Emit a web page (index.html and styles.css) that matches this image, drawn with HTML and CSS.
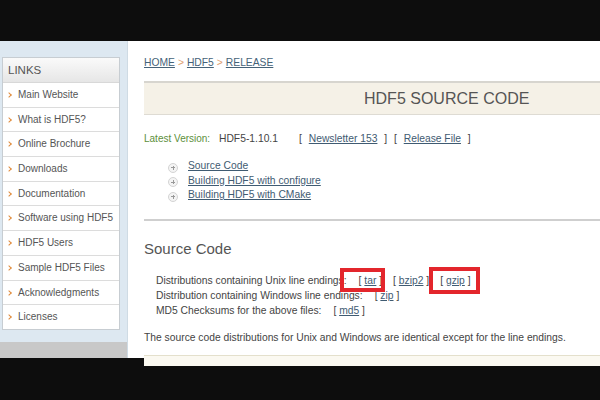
FILE: index.html
```html
<!DOCTYPE html>
<html>
<head>
<meta charset="utf-8">
<link rel="stylesheet" href="styles.css">
</head>
<body>
<div class="frame">
  <div class="bar top"></div>
  <div class="page">
    <aside class="sidebar">
      <div class="side-top">
        <div class="links">
          <div class="links-head">LINKS</div>
          <a class="link">Main Website</a>
          <a class="link">What is HDF5?</a>
          <a class="link">Online Brochure</a>
          <a class="link">Downloads</a>
          <a class="link">Documentation</a>
          <a class="link">Software using HDF5</a>
          <a class="link">HDF5 Users</a>
          <a class="link">Sample HDF5 Files</a>
          <a class="link">Acknowledgments</a>
          <a class="link">Licenses</a>
        </div>
      </div>
      <div class="side-foot"></div>
    </aside>
    <main class="main">
      <div class="crumbs"><a>HOME</a><span class="sep">&gt;</span><a>HDF5</a><span class="sep">&gt;</span><a>RELEASE</a></div>
      <div class="title-box"><span>HDF5 SOURCE CODE</span></div>
      <div class="latest">
        <span class="lv">Latest Version:</span>
        <span class="ver">HDF5-1.10.1</span>
        <span class="refs">[ <a>Newsletter 153</a> ] [ <a>Release File</a> ]</span>
      </div>
      <ul class="toc">
        <li><span class="plus"></span><a>Source Code</a></li>
        <li><span class="plus"></span><a>Building HDF5 with configure</a></li>
        <li><span class="plus"></span><a>Building HDF5 with CMake</a></li>
      </ul>
      <hr class="rule">
      <h2 class="sec">Source Code</h2>
      <div class="dist">
        <div class="row"><span class="lbl">Distributions containing Unix line endings:</span><span class="files"><span>[ <a>tar</a> ]</span><span>[ <a>bzip2</a> ]</span><span>[ <a>gzip</a> ]</span></span></div>
        <div class="row"><span class="lbl">Distribution containing Windows line endings:</span><span class="files"><span>[ <a>zip</a> ]</span></span></div>
        <div class="row"><span class="lbl">MD5 Checksums for the above files:</span><span class="files"><span>[ <a>md5</a> ]</span></span></div>
      </div>
      <p class="note">The source code distributions for Unix and Windows are identical except for the line endings.</p>
      <div class="next-box"></div>
      <div class="mark m1"></div>
      <div class="mark m2"></div>
    </main>
  </div>
  <div class="bar bottom"></div>
</div>
</body>
</html>
```
FILE: styles.css
```css
html, body {
  margin: 0;
  padding: 0;
  background: #0b0b0b;
}
.frame {
  width: 600px;
  height: 400px;
  display: flex;
  flex-direction: column;
  font-family: "Liberation Sans", Arial, sans-serif;
  overflow: hidden;
}
.bar {
  background: #0d0d0d;
}
.bar.top { height: 41px; }
.bar.bottom { flex: 1; }
.page {
  height: 317px;
  display: flex;
  background: #fff;
}
.sidebar {
  width: 127px;
  display: flex;
  flex-direction: column;
  border-right: 1px solid #cfdbe4;
}
.side-top {
  flex: 1;
  background: #dde8f1;
  padding: 16px 0 0 2px;
}
.side-foot {
  height: 16px;
  background: #c8c8c8;
}
.links {
  width: 116px;
  border: 1px solid #c7cdd2;
  background: #fff;
  display: flex;
  flex-direction: column;
}
.links-head {
  height: 24px;
  line-height: 24px;
  padding-left: 5px;
  font-size: 11.5px;
  color: #555;
  background: linear-gradient(#fafafa, #e6e6e6);
  border-bottom: 1px solid #d8d8d8;
}
.link {
  height: 23.7px;
  line-height: 23.7px;
  border-bottom: 1px solid #dcdcdc;
  font-size: 10px;
  color: #555;
  padding-left: 15px;
  position: relative;
  white-space: nowrap;
  text-decoration: none;
}
.link:last-child { border-bottom: 0; }
.link::before {
  content: "";
  position: absolute;
  left: 4px;
  top: 10px;
  width: 3px;
  height: 3px;
  border-right: 1.3px solid #e08a3a;
  border-top: 1.3px solid #e08a3a;
  transform: rotate(45deg);
}
.main {
  flex: 1;
  position: relative;
  padding: 15px 0 0 16px;
  color: #444;
  font-size: 10.3px;
}
a {
  color: #3f5b72;
  text-decoration: underline;
}
.crumbs {
  font-size: 10.3px;
  height: 14px;
  line-height: 14px;
}
.crumbs a { color: #456278; }
.crumbs .sep {
  color: #e0a070;
  margin: 0 3px;
}
.title-box {
  margin-top: 11px;
  height: 30px;
  padding-top: 1px;
  line-height: 30px;
  background: #f5f1e7;
  border-top: 2px solid #d7d5cf;
  border-bottom: 1px solid #dedbd3;
  padding-left: 220px;
  font-size: 16px;
  color: #555;
}
.latest {
  margin-top: 17px;
  height: 14px;
  line-height: 14px;
  display: flex;
}
.lv { color: #5d8f3c; width: 75px; font-size: 10px; }
.ver { width: 80px; }
.refs { word-spacing: 4px; }
.refs a { color: #3f5b72; word-spacing: 0; }
.toc {
  list-style: none;
  margin: 13px 0 0 0;
  padding: 0 0 0 24px;
}
.toc li {
  height: 14.5px;
  line-height: 14.5px;
  display: flex;
  align-items: center;
  font-size: 10.3px;
}
.plus {
  width: 8px;
  height: 8px;
  border-radius: 50%;
  border: 1px solid #d4d4d4;
  background: #f4f4f4;
  position: relative;
  margin-right: 10px;
  margin-top: 3px;
}
.plus::before, .plus::after {
  content: "";
  position: absolute;
  background: #999;
}
.plus::before { left: 2px; top: 3.5px; width: 4px; height: 1px; }
.plus::after { left: 3.5px; top: 2px; width: 1px; height: 4px; }
.rule {
  margin: 16px 0 0 0;
  border: 0;
  height: 2px;
  background: #cfcfcf;
}
.sec {
  margin: 19px 0 0 0;
  font-weight: normal;
  font-size: 15px;
  line-height: 18px;
  color: #555;
}
.dist {
  margin-top: 15px;
  padding-left: 12px;
}
.row {
  height: 15px;
  line-height: 15px;
  display: flex;
  gap: 12px;
}
.lbl { white-space: nowrap; }
.files { display: flex; gap: 11px; }
.note {
  margin: 13px 0 0 0;
  line-height: 14px;
}
.next-box {
  margin-top: 10px;
  height: 10px;
  border-top: 1px solid #e4e0cc;
  background: #fbf9f1;
}
.mark {
  position: absolute;
  border: 4px solid #e3262c;
}
.m1 { left: 212px; top: 227px; width: 37px; height: 16px; }
.m2 { left: 301px; top: 226px; width: 43px; height: 19px; }
```
